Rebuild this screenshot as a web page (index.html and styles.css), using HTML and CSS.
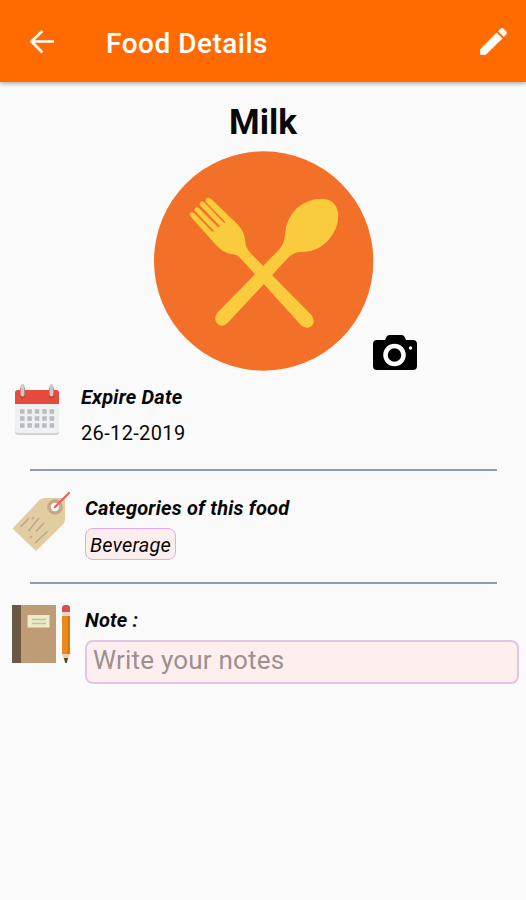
FILE: index.html
```html
<!DOCTYPE html>
<html lang="en">
<head>
<meta charset="utf-8">
<title>Food Details</title>
<link rel="stylesheet" href="styles.css">
</head>
<body>
<header class="bar">
  <svg class="back" viewBox="0 0 24 24" width="24" height="24"><path d="M24 11.500H2M12.500 .800L1.500 11.500l11 11" fill="none" stroke="currentColor" stroke-width="2.700"/></svg>
  <h1 class="bar-title">Food Details</h1>
  <svg class="edit" viewBox="3 3 18 18" width="27" height="27"><path fill="currentColor" stroke="currentColor" stroke-width=".3" stroke-linejoin="round" d="M3.200 17.250V20.800h3.550L17.810 9.940l-3.750-3.750L3.200 17.250zM20.500 7.040a1.300 1.300 0 0 0 0-1.600l-1.950-1.950a1.300 1.300 0 0 0-1.600 0l-1.830 1.630 3.750 3.750 1.630-1.830z"/></svg>
</header>
<main>
  <h2 class="name">Milk</h2>
  <div class="photo">
    <svg class="plate" viewBox="0 0 720 660" width="240" height="220">
      <circle cx="356" cy="330" r="329" fill="#f37028"/>
      <g fill="#f9cb3d" transform="translate(0 -18)">
        <path d="M134 207Q137 198 148 205L203 261L207 258L149 197Q147 187 156 186L164 191L221 248L225 244L164 180Q163 169 173 169L180 174L238 235L241 231L182 170Q181 158 190 158Q196 159 202 165L279 239Q301 263 301 293Q304 311 319 327L500 511Q513 531 499 544Q484 554 468 541L291 345Q275 326 260 328Q235 324 213 300L136 214Z"/>
        <path d="M420 270Q422 222 455 190Q487 161 532 161Q576 163 580 211Q580 253 548 288Q515 321 476 320Q447 320 431 337L250 532Q233 550 217 537Q203 521 218 502L399 317Q418 298 420 270Z"/>
      </g>
    </svg>
    <svg class="camera" viewBox="0 0 44 35" width="44" height="35"><path fill="#000" d="M4 5h8l2-4q1-1 3-1h11q2 0 3 1l2 4h7q4 0 4 4v22q0 4-4 4H4q-4 0-4-4V9q0-4 4-4z"/><circle cx="21.500" cy="20" r="9" fill="none" stroke="#fff" stroke-width="4.500"/><circle cx="37.500" cy="13" r="1.700" fill="#fff"/></svg>
  </div>

  <section class="row expire">
    <svg class="pic" viewBox="0 0 60 60" width="60" height="60">
      <rect x="3" y="6" width="44" height="45" rx="3" fill="#cfd3d5"/>
      <path d="M3 20h44v26q0 3-3 3H6q-3 0-3-3z" fill="#eef0f2"/>
      <path d="M3 20V9q0-3 3-3h38q3 0 3 3v11z" fill="#e54b3c"/>
      <path d="M10.500 5v7M39.500 5v7" stroke="#bd443a" stroke-width="5" stroke-linecap="round"/>
      <path d="M10.500 2v8.500M39.500 2v8.500" stroke="#cdc8c5" stroke-width="4" stroke-linecap="round"/>
      <path d="M8 27.500h35M8 34.500h35M8 41.500h35" stroke="#b8bcc2" stroke-width="4.500" stroke-dasharray="4.500 2.900"/>
    </svg>
    <div class="info">
      <h3 class="label">Expire Date</h3>
      <p class="date">26-12-2019</p>
    </div>
  </section>
  <hr class="rule">

  <section class="row categories">
    <svg class="pic" viewBox="0 0 60 60" width="60" height="60">
      <path d="M.500 36.500L28 7.500Q30 6 33 6h18q2 0 2 2v20q0 2-1.500 4L24 59Z" fill="#e3cca1"/>
      <circle cx="43" cy="15" r="6" fill="#fafafa" stroke="#c5aa88" stroke-width="3.600"/>
      <path d="M43 15L57 1" stroke="#dd676a" stroke-width="2.400" stroke-linecap="round"/>
      <path d="M8.500 35L17 26M16.500 39L27 26M20 27l2-2M24 39.500L32 31M18 46l2-2M23 51L35.500 39.500" stroke="#bba98c" stroke-width="1.600" fill="none"/>
    </svg>
    <div class="info">
      <h3 class="label">Categories of this food</h3>
      <span class="chip">Beverage</span>
    </div>
  </section>
  <hr class="rule">

  <section class="row note">
    <svg class="pic" viewBox="0 0 60 60" width="60" height="60">
      <path d="M0 0h44v58H0z" fill="#bd9c76"/><path d="M0 0h9v58H0z" fill="#6b5946"/>
      <path d="M15.500 10h22v12.500h-22z" fill="#eeebc9"/><path d="M20 14.500h14M20 18.500h14" stroke="#bdc1a5" stroke-width="1.300"/>
      <path d="M50 7V3q0-3 3-3h2q3 0 3 3v4z" fill="#d05258"/><path d="M50 7h8v4h-8z" fill="#ddd8d2"/>
      <path d="M50 11h8v38h-8z" fill="#e98a1c"/><path d="M55.500 11H58v38h-2.500z" fill="#d87812"/>
      <path d="M50 49h8l-3 9h-2z" fill="#ecd0a5"/><path d="M52 53h4l-1.300 5h-1.400z" fill="#454545"/>
    </svg>
    <div class="info">
      <h3 class="label">Note :</h3>
      <div class="field">Write your notes</div>
    </div>
  </section>
</main>
</body>
</html>
```
FILE: styles.css
```css
* { box-sizing: border-box; }
body {
  margin: 0;
  min-height: 900px;
  background: #fafafa;
  color: #080808;
  font-family: Roboto, "Liberation Sans", sans-serif;
}
h1, h2, h3, p { margin: 0; }
svg { display: block; flex: none; }
.bar {
  display: flex;
  align-items: center;
  height: 82px;
  padding: 1px 19px 0 30px;
  background: #ff6b00;
  color: #fff;
  box-shadow: 0 1px 5px rgba(0, 0, 0, .4);
}
.bar-title {
  flex: 1;
  padding-top: 4px;
  margin-left: 52px;
  font-size: 28px;
  font-weight: 500;
  line-height: 34px;
  letter-spacing: .5px;
}
.name {
  padding-top: 20px;
  height: 70px;
  font-size: 35px;
  line-height: 41px;
  font-weight: 700;
  text-align: center;
}
.photo {
  display: flex;
  align-items: flex-end;
  padding-left: 145px;
  height: 219px;
}
.plate { margin-right: -12px; }
.camera { margin-bottom: 1px; }
.row { display: flex; padding: 0 7px 0 12px; }
.pic { margin-right: 13px; }
.info { flex: 1; }
.label {
  font-size: 20px;
  line-height: 24px;
  font-weight: 700;
  font-style: italic;
  letter-spacing: .2px;
}
.expire { height: 98px; padding-top: 13px; }
.expire .info { margin-left: -4px; padding-top: 1px; }
.date { margin-top: 12px; font-size: 20px; line-height: 24px; letter-spacing: .35px; }
.rule {
  margin: 0 29px 0 30px;
  height: 2px;
  border: 0;
  background: #8a9db5;
}
.categories { height: 111px; padding-top: 21px; }
.categories .info { padding-top: 4px; }
.chip {
  display: inline-block;
  margin-top: 8px;
  height: 32px;
  padding: 1px 4px 0;
  border: 1px solid #e2a8e8;
  border-radius: 8px;
  background: #fdeeee;
  font-size: 20px;
  line-height: 31px;
  font-style: italic;
  letter-spacing: .15px;
}
.note { padding-top: 21px; }
.note .info { padding-top: 3px; }
.field {
  margin-top: 8px;
  height: 44px;
  padding-left: 6px;
  border: 2px solid #e2c4e5;
  border-radius: 8px;
  background: #ffeeee;
  color: #9c9090;
  font-size: 26px;
  line-height: 37px;
  letter-spacing: .2px;
}
```
